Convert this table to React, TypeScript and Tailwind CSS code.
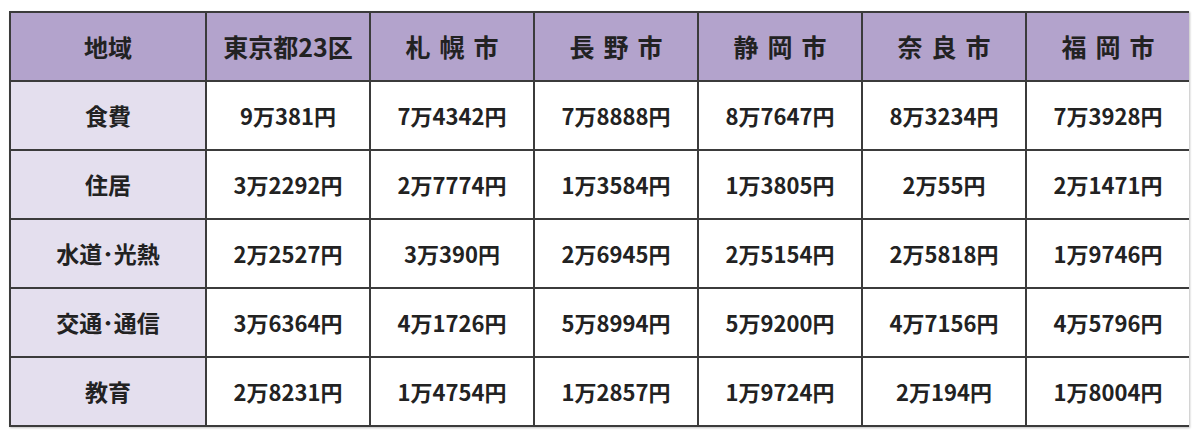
import React from "react";

const cities = ["東京都23区", "札幌市", "長野市", "静岡市", "奈良市", "福岡市"];

const rows: { label: string; values: string[] }[] = [
  { label: "食費", values: ["9万381円", "7万4342円", "7万8888円", "8万7647円", "8万3234円", "7万3928円"] },
  { label: "住居", values: ["3万2292円", "2万7774円", "1万3584円", "1万3805円", "2万55円", "2万1471円"] },
  { label: "水道･光熱", values: ["2万2527円", "3万390円", "2万6945円", "2万5154円", "2万5818円", "1万9746円"] },
  { label: "交通･通信", values: ["3万6364円", "4万1726円", "5万8994円", "5万9200円", "4万7156円", "4万5796円"] },
  { label: "教育", values: ["2万8231円", "1万4754円", "1万2857円", "1万9724円", "2万194円", "1万8004円"] },
];

function CityName({ name }: { name: string }) {
  // 市名は一文字ずつ間を空けて表示、東京都23区だけ詰める
  if (name.endsWith("区")) return <span>{name}</span>;
  return (
    <span className="flex gap-[9px]">
      {name.split("").map((c, i) => (
        <span key={i}>{c}</span>
      ))}
    </span>
  );
}

export default function App() {
  return (
    <div className="min-h-[439px] bg-white pl-[9px] pt-[11px] font-['Noto_Sans_CJK_JP','Noto_Sans',sans-serif] text-[#222]">
      <div className="grid w-[1180px] grid-cols-[194px_repeat(6,162px)] grid-rows-[repeat(6,67px)] gap-[2px] bg-[#3b3b3b] p-[2px] shadow-[1px_1px_2px_rgba(0,0,0,0.25)]">
        <div className="flex items-center justify-center bg-[#b3a3cc] text-[24px] font-bold">地域</div>
        {cities.map((c) => (
          <div key={c} className="flex items-center justify-center bg-[#b3a3cc] text-[25px] font-bold">
            <CityName name={c} />
          </div>
        ))}
        {rows.map((r) => (
          <React.Fragment key={r.label}>
            <div className="flex items-center justify-center bg-[#e4dfee] text-[23px] font-bold">{r.label}</div>
            {r.values.map((v, i) => (
              <div key={i} className="flex items-center justify-center bg-white text-[22px] font-bold">
                {v}
              </div>
            ))}
          </React.Fragment>
        ))}
      </div>
    </div>
  );
}
